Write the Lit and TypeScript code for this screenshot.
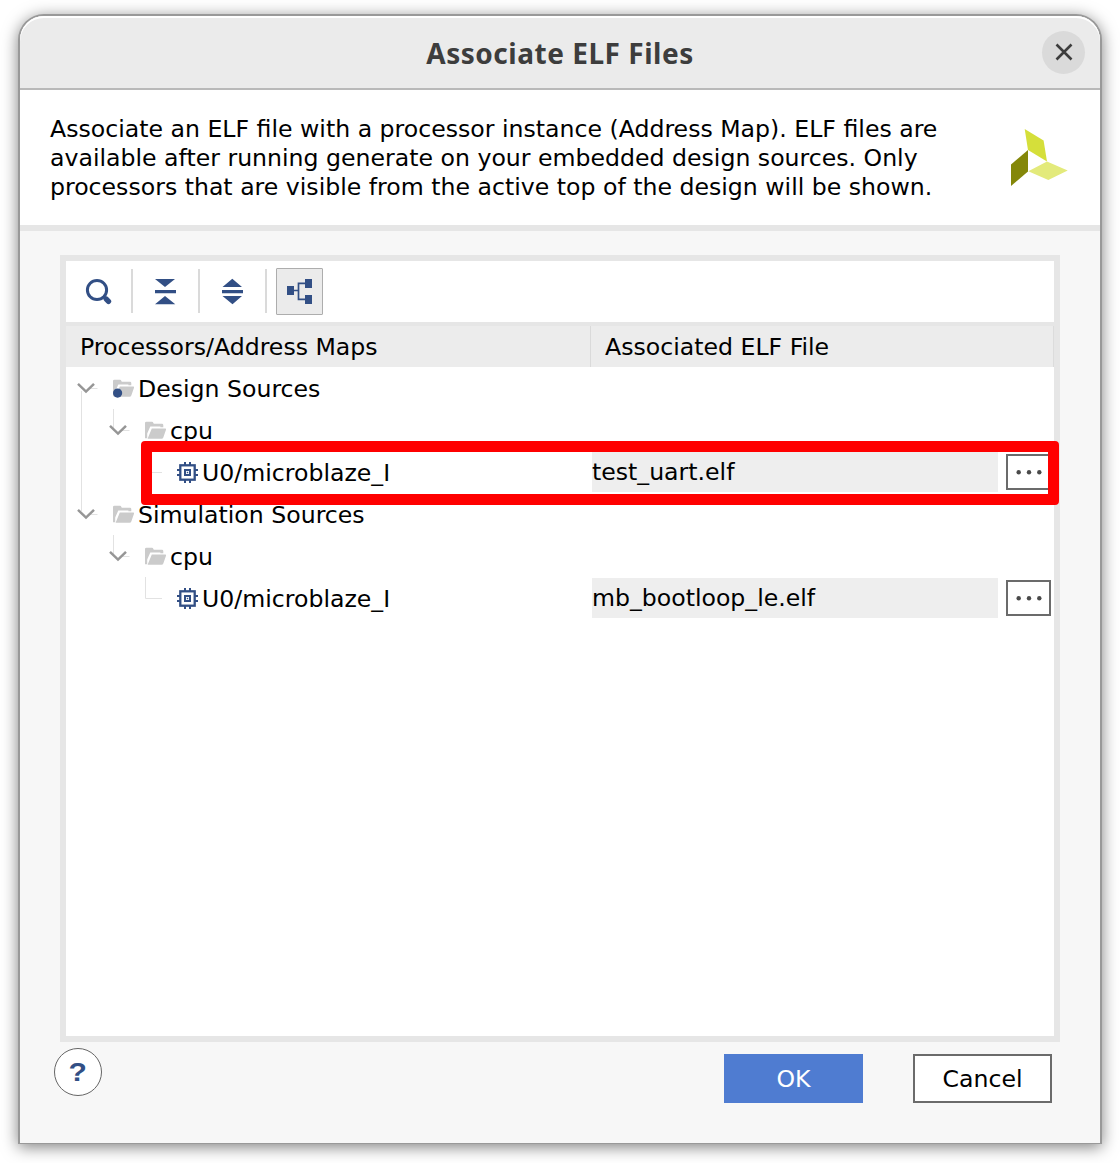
import { LitElement, html, css, svg, nothing } from "lit";
import { customElement, property } from "lit/decorators.js";

interface TreeNode {
  depth: number;
  label: string;
  kind: "folder" | "chip";
  dot?: boolean;
  /** how the root guide line passes through this row */
  rail?: "start" | "through" | "end";
  file?: string;
}

const NODES: TreeNode[] = [
  { depth: 0, label: "Design Sources", kind: "folder", dot: true, rail: "start" },
  { depth: 1, label: "cpu", kind: "folder", rail: "through" },
  { depth: 2, label: "U0/microblaze_I", kind: "chip", rail: "through", file: "test_uart.elf" },
  { depth: 0, label: "Simulation Sources", kind: "folder", rail: "end" },
  { depth: 1, label: "cpu", kind: "folder" },
  { depth: 2, label: "U0/microblaze_I", kind: "chip", file: "mb_bootloop_le.elf" },
];

@customElement("tree-row")
export class TreeRow extends LitElement {
  @property({ attribute: false }) node!: TreeNode;

  static styles = css`
    :host { display: grid; grid-template-columns: 526px 406px 45px; column-gap: 0; height: 42px; }
    .name { display: flex; align-items: flex-start; height: 42px; white-space: pre; }
    .lead { display: block; flex: none; }
    .label { line-height: 44px; }
    .file { background: #eeeeee; height: 40px; margin-top: 1px; line-height: 41px; white-space: pre; }
    .more { box-sizing: border-box; width: 45px; height: 36px; margin: 3px 0 0 8px; border: 2px solid #6b6b6b;
      background: #fff; padding: 0; display: flex; align-items: center; justify-content: center; }
    .guide { stroke: #e2e2e2; stroke-width: 1; fill: none; }
    .chev { stroke: #969696; stroke-width: 2.5; fill: none; }
    .folder { fill: #cbcbcb; }
    .blue { fill: #324f85; }
    .line { stroke: #324f85; fill: none; }
  `;

  private rail() {
    const r = this.node.rail;
    if (!r) return nothing;
    const d = r === "start" ? "M15.5 24V42" : r === "through" ? "M15.5 0V42" : "M15.5 0V18";
    return svg`<path class="guide" d=${d}/>`;
  }

  private glyph() {
    const n = this.node;
    if (n.kind === "chip") {
      return svg`<g>
        <path class="line" stroke-width="2" d="M119 11v4M124 11v4M119 28v4M124 28v4M111 19h4M111 24h4M128 19h4M128 24h4"/>
        <rect class="line" stroke-width="2.3" x="114.3" y="14.3" width="14.4" height="14.4"/>
        <rect class="line" stroke-width="2" x="119" y="19" width="5" height="5"/>
        <rect class="blue" x="120.8" y="20.8" width="1.4" height="1.4"/></g>`;
    }
    return svg`<g>
      <path class="folder" d="M47 29.2V14Q47 12.8 48.4 12.8H54Q55 12.8 55.4 14L55.8 14.8H64Q65.3 14.8 65.3 16.2V18.2H62.4V17.6H52.3L49.2 24.5V29.2Z"/>
      <path class="folder" d="M53.8 19.6H67.2Q68.4 19.6 68 20.8L65.3 28.4Q64.9 29.8 63.5 29.8H49.6Z"/>
      ${n.dot ? svg`<circle class="blue" cx="51.6" cy="26.1" r="4.6"/>` : nothing}</g>`;
  }

  render() {
    const n = this.node;
    const w = 72 + n.depth * 32;
    const shift = n.depth * 32;
    return html`
      <div class="name">
        <svg class="lead" width=${w} height="42" viewBox="0 0 ${w} 42">
          ${this.rail()}
          ${n.kind === "chip"
            ? svg`<path class="guide" d="M79.5 0V21.5H96"/>`
            : svg`<g transform="translate(${shift} 0)">
                <path class="guide" d="M24 21.5H31.5"/>
                ${n.depth ? svg`<path class="guide" d="M15.5 0V20"/>` : nothing}
                <path class="chev" d="M12 16.8L20 24.6L28 16.8"/></g>`}
          ${n.kind === "chip" ? this.glyph() : svg`<g transform="translate(${shift} 0)">${this.glyph()}</g>`}
        </svg>
        <span class="label">${n.label}</span>
      </div>
      ${n.file
        ? html`<div class="file">${n.file}</div>
            <button class="more" aria-label="Browse">
              <svg width="26" height="6" viewBox="0 0 26 6" fill="#4a4a4a">
                <circle cx="2.7" cy="3.2" r="2.2"/><circle cx="13" cy="3.2" r="2.2"/><circle cx="23.3" cy="3.2" r="2.2"/>
              </svg>
            </button>`
        : nothing}
    `;
  }
}

@customElement("app-root")
export class AppRoot extends LitElement {
  static styles = css`
    :host { display: block; box-sizing: border-box; width: 1120px; height: 1163px; padding: 14px 18px 19px; background: #fff;
      overflow: hidden; font-family: "DejaVu Sans", sans-serif; font-size: 23.62px; color: #000; }
    * { box-sizing: border-box; }
    button { font: inherit; }
    .window { width: 1084px; height: 1130px; border: 2px solid #999; border-bottom-width: 1px; border-radius: 26px 26px 0 0;
      background: #f7f7f7; display: flex; flex-direction: column; box-shadow: 0 3px 16px rgba(0,0,0,.5); }
    .title { height: 74px; flex: none; border-bottom: 2px solid #b9b9b9; background: #ebebeb; border-radius: 24px 24px 0 0;
      box-shadow: inset 0 2px 0 #fff; display: grid; grid-template-columns: 58px 1fr 58px; align-items: center; }
    .title h1 { grid-column: 2; margin: 0; padding-top: 2px; text-align: center; font: 700 28px/40px "Noto Sans", sans-serif;
      letter-spacing: .52px; color: #3d3d3d; white-space: nowrap; }
    .close { width: 43px; height: 43px; border: 0; border-radius: 50%; background: #dadada; padding: 0; display: grid; place-items: center; }
    .intro { height: 141px; flex: none; background: #fff; border-bottom: 6px solid #e6e6e6; display: flex;
      justify-content: space-between; padding: 25px 32px 0 30px; }
    .intro p { margin: 0; line-height: 29px; white-space: pre; }
    .logo { margin-top: 13px; }
    .panel { margin: 24px 40px 0; height: 787px; flex: none; border: 6px solid #e6e6e6; background: #fff; }
    .tools { height: 65px; border-bottom: 4px solid #e6e6e6; display: flex; }
    .tool { display: block; width: 65px; height: 61px; }
    .sep { width: 2px; height: 44px; margin-top: 8px; background: #dadada; }
    .toggle { width: 47px; height: 47px; margin: 7px 0 0 9px; border: 1px solid #adadad; border-radius: 1px; background: #ebebeb; padding: 0; }
    .toggle svg { display: block; }
    .head { height: 41px; display: grid; grid-template-columns: 524px 1fr; background: #ececec; line-height: 43px; border-right: 1px solid #dcdcdc; }
    .head span { padding-left: 14px; height: 41px; }
    .head span + span { border-left: 1px solid #dadada; }
    .tree { position: relative; }
    .mark { position: absolute; left: 75px; top: 74px; width: 918px; height: 64px; border: 11px solid #f00; border-radius: 4px; }
    .foot { display: flex; padding: 6px 48px 0 34px; align-items: flex-start; }
    .help { width: 48px; height: 48px; border: 1px solid #666; border-radius: 50%; background: #fff; padding: 0;
      font: 700 25px/46px "Liberation Sans", sans-serif; color: #324f85; }
    .help span { display: inline-block; transform: scaleX(1.2); }
    .btn { width: 139px; height: 49px; margin-top: 6px; padding: 2px 0 0; line-height: 43px; }
    .ok { margin-left: auto; border: 0; background: #4f7cd1; color: #fff; }
    .cancel { margin-left: 50px; border: 2px solid #6b6b6b; background: #fff; color: #000; }
    .blue { fill: #324f85; }
    .line { stroke: #324f85; fill: none; }
  `;

  render() {
    return html`
      <div class="window">
        <div class="title">
          <h1>Associate ELF Files</h1>
          <button class="close" aria-label="Close">
            <svg width="18" height="18" viewBox="0 0 18 18"><path d="M1.5 1.5L16.5 16.5M16.5 1.5L1.5 16.5" stroke="#3d3d3d" stroke-width="2.6"/></svg>
          </button>
        </div>
        <div class="intro">
          <p>Associate an ELF file with a processor instance (Address Map). ELF files are
available after running generate on your embedded design sources. Only
processors that are visible from the active top of the design will be shown.</p>
          <svg class="logo" width="58" height="60" viewBox="1010 128 58 60">
            <path fill="#d5df3a" d="M1024.7 129L1043.6 140.5L1047 161.5L1028 150Z"/>
            <path fill="#848709" d="M1028 150V171.5L1011 186V164.5Z"/>
            <path fill="#e3ea7b" d="M1028.3 171.3L1047 161.5L1067.7 170.5L1048.3 180Z"/>
          </svg>
        </div>
        <div class="panel">
          <div class="tools">
            <svg class="tool" viewBox="66 261 65 61">
              <circle class="line" stroke-width="3" cx="97" cy="290" r="9.6"/>
              <path class="line" stroke-width="2.5" d="M103 296L106 299"/>
              <path class="line" stroke-width="5.4" stroke-linecap="round" d="M106.3 299.2L108.5 301.4"/>
            </svg>
            <div class="sep"></div>
            <svg class="tool" viewBox="133 261 65 61">
              <path class="blue" d="M155 279H175L165 287ZM155 290H176V293.3H155ZM165 296L175.3 304.3H155Z"/>
            </svg>
            <div class="sep"></div>
            <svg class="tool" viewBox="200 261 65 61">
              <path class="blue" d="M232.3 278.7L242 287H222.5ZM222 290H243V293.3H222ZM222.5 296H242L232.5 304.3Z"/>
            </svg>
            <div class="sep"></div>
            <button class="toggle" aria-label="Hierarchy">
              <svg width="45" height="45" viewBox="277 269 45 45">
                <path class="blue" d="M287 286H294V295H287ZM305 279H312V288H305ZM305 295H312V304H305Z"/>
                <path class="line" stroke-width="1.7" d="M294 290.5H298.5M305 283.3H298.5V299.3H305"/>
              </svg>
            </button>
          </div>
          <div class="head"><span>Processors/Address Maps</span><span>Associated ELF File</span></div>
          <div class="tree">
            ${NODES.map((n) => html`<tree-row .node=${n}></tree-row>`)}
            <div class="mark"></div>
          </div>
        </div>
        <div class="foot">
          <button class="help"><span>?</span></button>
          <button class="btn ok">OK</button>
          <button class="btn cancel">Cancel</button>
        </div>
      </div>
    `;
  }
}
